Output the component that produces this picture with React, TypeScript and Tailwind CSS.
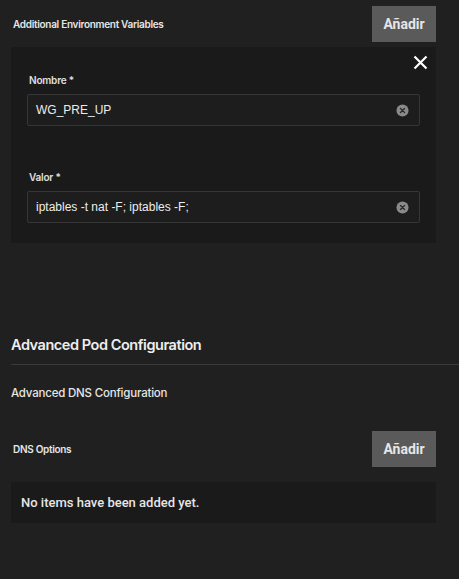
import React from "react";

function ClearIcon() {
  return (
    <svg width="13" height="13" viewBox="0 0 14 14" className="shrink-0">
      <circle cx="7" cy="7" r="6.5" fill="#8a8a8a" />
      <path d="M4.8 4.8 L9.2 9.2 M9.2 4.8 L4.8 9.2" stroke="#2a2a2a" strokeWidth="1.4" strokeLinecap="round" />
    </svg>
  );
}

function AddButton() {
  return (
    <button className="w-[64px] h-[36px] bg-[#5a5a5a] text-[#e6e6e6] text-[14px] font-bold font-['Roboto',sans-serif] flex items-center justify-center">
      Añadir
    </button>
  );
}

function Field({ label, value }: { label: string; value: string }) {
  return (
    <div className="flex flex-col">
      <div className="text-[10px] font-semibold text-[#e0e0e0] font-['Inter',sans-serif] pl-[2px] h-[14px] leading-[14px] tracking-[-0.2px]">
        {label}
      </div>
      <div className="mt-[7px] h-[32px] border border-[#363636] rounded-[2px] bg-[#1d1d1d] flex items-center pl-[8px] pr-[10px]">
        <span className="flex-1 text-[12px] text-[#ececec] font-['Liberation_Sans',Arial,sans-serif]">{value}</span>
        <ClearIcon />
      </div>
    </div>
  );
}

export default function App() {
  return (
    <div className="w-[459px] h-[579px] bg-[#202020] font-['Inter',sans-serif] overflow-hidden">
      <div className="pl-[11px] pr-[23px] pt-[6px]">
        <div className="flex items-center justify-between h-[36px]">
          <span className="pl-[2px] text-[10px] font-semibold text-[#e6e6e6] tracking-[-0.3px]">
            Additional Environment Variables
          </span>
          <AddButton />
        </div>
        <div className="mt-[5px] bg-[#1a1a1a] h-[196px] relative px-[16px] pt-[26px]">
          <svg
            className="absolute right-[8px] top-[8px]"
            width="15"
            height="15"
            viewBox="0 0 15 15"
          >
            <path d="M1.5 1.5 L13.5 13.5 M13.5 1.5 L1.5 13.5" stroke="#ffffff" strokeWidth="2.2" />
          </svg>
          <Field label="Nombre *" value="WG_PRE_UP" />
          <div className="h-[44px]" />
          <Field label="Valor *" value="iptables -t nat -F; iptables -F;" />
        </div>

        <div className="mt-[92px] text-[14.5px] font-semibold text-[#eeeeee] tracking-[-0.45px] h-[20px] leading-[20px]">
          Advanced Pod Configuration
        </div>
      </div>
      <div className="ml-[11px] mt-[9px] h-px bg-[#3a3a3a]" />
      <div className="pl-[11px] pr-[23px]">
        <div className="mt-[20px] text-[11.5px] font-medium text-[#e6e6e6] h-[16px] leading-[16px] tracking-[-0.2px]">
          Advanced DNS Configuration
        </div>
        <div className="mt-[30px] flex items-center justify-between h-[36px]">
          <span className="pl-[2px] text-[10px] font-semibold text-[#e6e6e6] tracking-[-0.3px]">
            DNS Options
          </span>
          <AddButton />
        </div>
        <div className="mt-[15px] h-[41px] bg-[#1a1a1a] flex items-center pl-[10px]">
          <span className="text-[13px] font-medium text-[#e6e6e6] font-['Roboto',sans-serif]">No items have been added yet.</span>
        </div>
      </div>
    </div>
  );
}
